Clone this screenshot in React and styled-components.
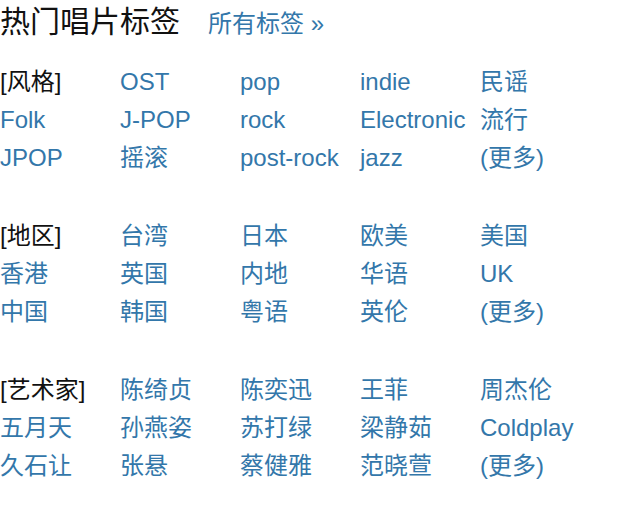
import React from "react";
import styled, { createGlobalStyle } from "styled-components";

const GlobalStyle = createGlobalStyle`
  body {
    margin: 0;
    background: #fff;
    color: #111;
    font-family: "Liberation Sans", "Noto Sans CJK SC", sans-serif;
    font-size: 24px;
  }
`;

const TagPanel = styled.section`
  padding-bottom: 20px;
`;

const Header = styled.header`
  display: flex;
  flex-wrap: wrap;
  align-items: baseline;
  column-gap: 28px;
  margin-bottom: 17px;
  line-height: 44px;
`;

const Title = styled.h2`
  margin: 0;
  font-size: 30px;
  font-weight: 400;
`;

const TagLink = styled.a`
  color: #3377aa;
  text-decoration: none;
  white-space: nowrap;

  &:hover {
    color: #fff;
    background: #3377aa;
  }
`;

const Groups = styled.div`
  display: grid;
  gap: 40px;
`;

const TagList = styled.ul`
  display: grid;
  grid-template-columns: repeat(auto-fill, 120px);
  margin: 0;
  padding: 0;
  list-style: none;
  line-height: 38px;
  white-space: nowrap;
`;

const TagItem = styled.li`
  height: 38px;
`;

const groups = [
  {
    name: "风格",
    tags: ["OST", "pop", "indie", "民谣", "Folk", "J-POP", "rock", "Electronic", "流行", "JPOP", "摇滚", "post-rock", "jazz"],
  },
  {
    name: "地区",
    tags: ["台湾", "日本", "欧美", "美国", "香港", "英国", "内地", "华语", "UK", "中国", "韩国", "粤语", "英伦"],
  },
  {
    name: "艺术家",
    tags: ["陈绮贞", "陈奕迅", "王菲", "周杰伦", "五月天", "孙燕姿", "苏打绿", "梁静茹", "Coldplay", "久石让", "张悬", "蔡健雅", "范晓萱"],
  },
];

export default function App() {
  return (
    <TagPanel lang="zh-CN">
      <GlobalStyle />
      <Header>
        <Title>热门唱片标签</Title>
        <TagLink href="#all">所有标签 »</TagLink>
      </Header>
      <Groups>
        {groups.map(({ name, tags }) => (
          <TagList key={name} aria-label={name}>
            <TagItem>[{name}]</TagItem>
            {tags.map((tag) => (
              <TagItem key={tag}>
                <TagLink href={`#${tag}`}>{tag}</TagLink>
              </TagItem>
            ))}
            <TagItem>
              <TagLink href={`#more-${name}`}>(更多)</TagLink>
            </TagItem>
          </TagList>
        ))}
      </Groups>
    </TagPanel>
  );
}
